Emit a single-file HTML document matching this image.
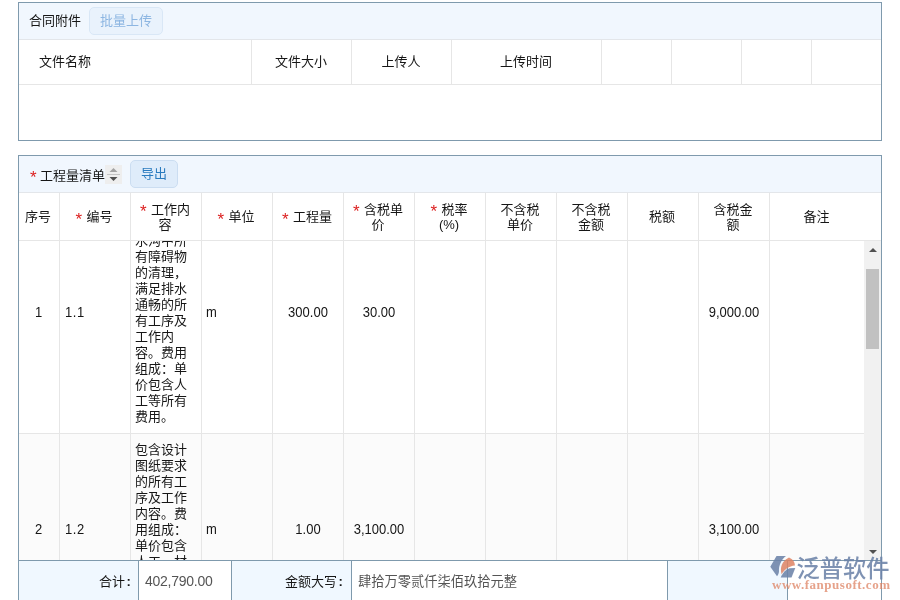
<!DOCTYPE html>
<html lang="zh-CN">
<head>
<meta charset="utf-8">
<title>合同附件</title>
<style>
html,body{margin:0;padding:0;}
body{width:900px;height:600px;overflow:hidden;background:#fff;position:relative;
 font-family:"Liberation Sans","Noto Sans CJK SC",sans-serif;font-size:13px;color:#161616;}
.abs{position:absolute;}
.panel{position:absolute;border:1px solid #7f9aad;box-sizing:border-box;background:#fff;}
.phead{position:absolute;left:0;top:0;right:0;background:#f1f7fe;border-bottom:1px solid #e3e6ea;box-sizing:border-box;}
.vl{position:absolute;width:1px;background:#e6e6e6;}
.hl{position:absolute;height:1px;background:#e6e6e6;}
.t{position:absolute;white-space:nowrap;line-height:16px;height:16px;}
.c{text-align:center;}
.red{color:#dc2020;font-size:17px;line-height:0;position:relative;top:4.5px;display:inline-block;margin-right:0.8px;}
.btn{position:absolute;box-sizing:border-box;border:1px solid #cbddf1;border-radius:5px;background:#dfecfa;text-align:center;}
.th{position:absolute;text-align:center;line-height:16px;}
.num{position:absolute;white-space:nowrap;line-height:16px;font-size:13px;transform:scaleY(1.1);transform-origin:50% 50%;}
.t,.th,.num,.btn,.txt{will-change:transform;}
</style>
</head>
<body>

<!-- Panel 1 -->
<div class="panel" style="left:18px;top:2px;width:864px;height:139px;">
  <div class="phead" style="height:37px;"></div>
</div>
<div class="t" style="left:28.5px;top:13px;">合同附件</div>
<div class="btn" style="left:89px;top:7px;width:74px;height:28px;line-height:25px;color:#8db6e2;background:#e9f2fc;border-color:#d9e7f6;">批量上传</div>

<div class="vl" style="left:251px;top:40px;height:44px;"></div>
<div class="vl" style="left:351px;top:40px;height:44px;"></div>
<div class="vl" style="left:451px;top:40px;height:44px;"></div>
<div class="vl" style="left:601px;top:40px;height:44px;"></div>
<div class="vl" style="left:671px;top:40px;height:44px;"></div>
<div class="vl" style="left:741px;top:40px;height:44px;"></div>
<div class="vl" style="left:811px;top:40px;height:44px;"></div>
<div class="hl" style="left:19px;top:84px;width:862px;"></div>
<div class="t" style="left:39px;top:54px;">文件名称</div>
<div class="t c" style="left:251px;width:100px;top:54px;">文件大小</div>
<div class="t c" style="left:351px;width:100px;top:54px;">上传人</div>
<div class="t c" style="left:451px;width:150px;top:54px;">上传时间</div>

<!-- Panel 2 -->
<div class="panel" style="left:18px;top:155px;width:864px;height:460px;">
  <div class="phead" style="height:37px;"></div>
</div>
<div class="t" style="left:30px;top:168px;"><span class="red" style="top:3px;margin-right:-0.2px;">*</span> 工程量清单</div>
<div class="abs" style="left:105px;top:165px;width:17px;height:19px;background:#eeeeee;"></div>
<svg class="abs" style="left:105px;top:165px;" width="17" height="19" viewBox="0 0 17 19">
  <path d="M8.5 3 L12.5 7 L4.5 7 Z" fill="#a3a3a3"/>
  <rect x="2" y="9" width="13" height="1" fill="#c4c4c4"/>
  <path d="M8.5 16 L12.5 12 L4.5 12 Z" fill="#4f4f4f"/>
</svg>
<div class="btn" style="left:130px;top:160px;width:48px;height:28px;line-height:25px;color:#2a7bbf;">导出</div>

<!-- table header -->
<div class="abs" style="left:19px;top:434px;width:846px;height:126px;background:#fbfbfb;"></div>
<div class="vl" style="left:59px;top:193px;height:367px;"></div>
<div class="vl" style="left:130px;top:193px;height:367px;"></div>
<div class="vl" style="left:201px;top:193px;height:367px;"></div>
<div class="vl" style="left:272px;top:193px;height:367px;"></div>
<div class="vl" style="left:343px;top:193px;height:367px;"></div>
<div class="vl" style="left:414px;top:193px;height:367px;"></div>
<div class="vl" style="left:485px;top:193px;height:367px;"></div>
<div class="vl" style="left:556px;top:193px;height:367px;"></div>
<div class="vl" style="left:627px;top:193px;height:367px;"></div>
<div class="vl" style="left:698px;top:193px;height:367px;"></div>
<div class="vl" style="left:769px;top:193px;height:367px;"></div>
<div class="hl" style="left:19px;top:240px;width:862px;"></div>

<div class="th" style="left:17.5px;width:40px;top:209px;">序号</div>
<div class="th" style="left:58.5px;width:70px;top:209px;"><span class="red" style="top:4px">*</span> 编号</div>
<div class="th" style="left:129.5px;width:70px;top:202px;line-height:15.3px;"><span class="red" style="top:2.5px">*</span> 工作内<br>容</div>
<div class="th" style="left:200.5px;width:70px;top:209px;"><span class="red" style="top:4px">*</span> 单位</div>
<div class="th" style="left:271.5px;width:70px;top:209px;"><span class="red" style="top:4px">*</span> 工程量</div>
<div class="th" style="left:342.5px;width:70px;top:202px;line-height:15.3px;"><span class="red" style="top:2.5px">*</span> 含税单<br>价</div>
<div class="th" style="left:413.5px;width:70px;top:202px;line-height:15.3px;"><span class="red" style="top:2.5px">*</span> 税率<br>(%)</div>
<div class="th" style="left:485px;width:70px;top:202px;line-height:15.3px;">不含税<br>单价</div>
<div class="th" style="left:556px;width:70px;top:202px;line-height:15.3px;">不含税<br>金额</div>
<div class="th" style="left:627px;width:70px;top:209px;">税额</div>
<div class="th" style="left:698px;width:70px;top:202px;line-height:15.3px;">含税金<br>额</div>
<div class="th" style="left:769px;width:95px;top:209px;">备注</div>

<!-- body rows -->
<div class="abs" id="body" style="left:19px;top:241px;width:846px;height:319px;overflow:hidden;">
  <div class="hl" style="left:0;top:192px;width:846px;"></div>
  <div class="abs txt" style="left:116px;top:-8px;width:62px;line-height:16px;">水沟中所有障碍物的清理，满足排水通畅的所有工序及工作内容。费用组成：单价包含人工等所有费用。</div>
  <div class="abs txt" style="left:116px;top:201px;width:62px;line-height:16px;">包含设计图纸要求的所有工序及工作内容。费用组成：单价包含人工、材料</div>
  <div class="num" style="left:15.5px;top:64px;">1</div>
  <div class="num" style="left:46px;top:64px;letter-spacing:0.6px;">1.1</div>
  <div class="num" style="left:187px;top:64px;">m</div>
  <div class="num c" style="left:254px;width:70px;top:64px;">300.00</div>
  <div class="num c" style="left:325px;width:70px;top:64px;">30.00</div>
  <div class="num c" style="left:680px;width:70px;top:64px;">9,000.00</div>
  <div class="num" style="left:15.5px;top:281px;">2</div>
  <div class="num" style="left:46px;top:281px;letter-spacing:0.6px;">1.2</div>
  <div class="num" style="left:187px;top:281px;">m</div>
  <div class="num c" style="left:254px;width:70px;top:281px;">1.00</div>
  <div class="num c" style="left:325px;width:70px;top:281px;">3,100.00</div>
  <div class="num c" style="left:680px;width:70px;top:281px;">3,100.00</div>
</div>

<!-- scrollbar -->
<div class="abs" style="left:864px;top:241px;width:17px;height:319px;background:#f1f1f1;"></div>
<div class="abs" style="left:866px;top:269px;width:13px;height:80px;background:#c1c1c1;"></div>
<svg class="abs" style="left:865px;top:241px;" width="16" height="16" viewBox="0 0 16 16"><path d="M4 11 L8 7 L12 11 Z" fill="#505050"/></svg>
<svg class="abs" style="left:865px;top:544px;" width="16" height="16" viewBox="0 0 16 16"><path d="M4 6 L8 10 L12 6 Z" fill="#505050"/></svg>

<!-- footer -->
<div class="abs" style="left:19px;top:560px;width:862px;height:40px;background:#f0f8ff;"></div>
<div class="hl" style="left:19px;top:560px;width:862px;background:#7f9aad;"></div>
<div class="abs" style="left:138px;top:561px;width:94px;height:39px;background:#fff;border-left:1px solid #7f9aad;border-right:1px solid #7f9aad;box-sizing:border-box;"></div>
<div class="abs" style="left:351px;top:561px;width:317px;height:39px;background:#fff;border-left:1px solid #7f9aad;border-right:1px solid #7f9aad;box-sizing:border-box;"></div>
<div class="abs" style="left:787px;top:561px;width:94px;height:39px;background:#fff;border-left:1px solid #7f9aad;box-sizing:border-box;"></div>
<div class="t" style="left:98.5px;top:574px;">合计<span style="margin-left:1.5px;font-weight:bold">:</span></div>
<div class="t" style="left:145px;top:573px;color:#555;font-size:14px;letter-spacing:-0.25px;">402,790.00</div>
<div class="t" style="left:285px;top:574px;">金额大写<span style="margin-left:1.5px;font-weight:bold">:</span></div>
<div class="t" style="left:357.5px;top:574px;color:#555;font-size:13.25px;">肆拾万零贰仟柒佰玖拾元整</div>

<!-- watermark logo -->
<svg class="abs" style="left:764px;top:548px;" width="136" height="52" viewBox="764 548 136 52">
  <g fill="#6c83a9" fill-opacity="0.88">
    <path d="M770.3 566.8 L776.5 556 L786 556 C781 560 778.5 566 779 571 C779 573 778 575 777 576.2 Z"/>
    <path d="M795.3 568 L791.5 577.6 L780.7 577.6 C782.5 573 785.5 569.5 789.5 568.2 Z"/>
    <text x="796.5" y="576.5" font-family="'Liberation Sans','Noto Sans CJK SC',sans-serif" font-size="24" font-weight="500" textLength="93" lengthAdjust="spacingAndGlyphs">泛普软件</text>
  </g>
  <path d="M789 557.4 C793 559 795 562 794.9 565.5 C789 566 784.5 569.5 781.6 574.2 C779.5 567 782.5 560.5 789 557.4 Z" fill="#de8363" fill-opacity="0.85"/>
  <text x="772" y="588.8" font-family="'Liberation Serif',serif" font-size="13" font-weight="700" fill="#de8363" fill-opacity="0.75" textLength="118" lengthAdjust="spacing">www.fanpusoft.com</text>
</svg>

</body>
</html>
